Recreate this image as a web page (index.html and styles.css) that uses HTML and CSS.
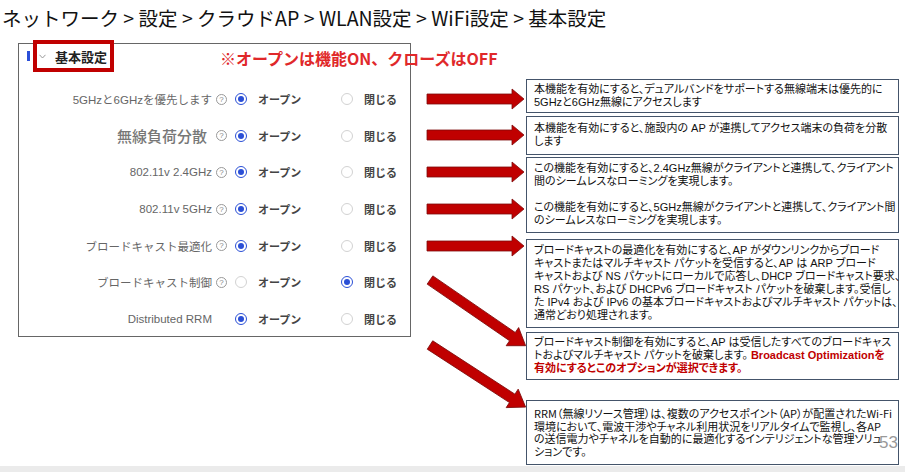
FILE: index.html
```html
<!DOCTYPE html>
<html lang="ja">
<head>
    <meta charset="UTF-8">
    <title>基本設定</title>
    <link rel="stylesheet" href="styles.css">
</head>
<body>
<div class="page">
    <h1 class="title">ネットワーク &gt; 設定 &gt; クラウドAP &gt; WLAN設定 &gt; WiFi設定 &gt; 基本設定</h1>

    <div class="content">
        <!-- 設定パネル -->
        <div class="panel">
            <div class="panel-head">
                <span class="bar"></span>
                <div class="head-box">
                    <svg class="chev" width="7" height="5" viewBox="0 0 7 5"><polyline points="0.5,0.8 3.5,4 6.5,0.8" fill="none" stroke="#999" stroke-width="1"/></svg>
                    <strong>基本設定</strong>
                </div>
                <span class="note">※オープンは機能ON、クローズはOFF</span>
            </div>

            <div class="rows">
                <div class="row">
                    <span class="label">5GHzと6GHzを優先します</span>
                    <span class="help">?</span>
                    <div class="opts">
                        <div class="opt"><span class="radio on"></span><span class="opt-text">オープン</span></div>
                        <div class="opt"><span class="radio"></span><span class="opt-text">閉じる</span></div>
                    </div>
                </div>
                <div class="row">
                    <span class="label big">無線負荷分散</span>
                    <span class="help">?</span>
                    <div class="opts">
                        <div class="opt"><span class="radio on"></span><span class="opt-text">オープン</span></div>
                        <div class="opt"><span class="radio"></span><span class="opt-text">閉じる</span></div>
                    </div>
                </div>
                <div class="row">
                    <span class="label">802.11v 2.4GHz</span>
                    <span class="help">?</span>
                    <div class="opts">
                        <div class="opt"><span class="radio on"></span><span class="opt-text">オープン</span></div>
                        <div class="opt"><span class="radio"></span><span class="opt-text">閉じる</span></div>
                    </div>
                </div>
                <div class="row">
                    <span class="label">802.11v 5GHz</span>
                    <span class="help">?</span>
                    <div class="opts">
                        <div class="opt"><span class="radio on"></span><span class="opt-text">オープン</span></div>
                        <div class="opt"><span class="radio"></span><span class="opt-text">閉じる</span></div>
                    </div>
                </div>
                <div class="row">
                    <span class="label">ブロードキャスト最適化</span>
                    <span class="help">?</span>
                    <div class="opts">
                        <div class="opt"><span class="radio on"></span><span class="opt-text">オープン</span></div>
                        <div class="opt"><span class="radio"></span><span class="opt-text">閉じる</span></div>
                    </div>
                </div>
                <div class="row">
                    <span class="label">ブロードキャスト制御</span>
                    <span class="help">?</span>
                    <div class="opts">
                        <div class="opt"><span class="radio"></span><span class="opt-text">オープン</span></div>
                        <div class="opt"><span class="radio on"></span><span class="opt-text">閉じる</span></div>
                    </div>
                </div>
                <div class="row">
                    <span class="label">Distributed RRM</span>
                    <span class="help blank"></span>
                    <div class="opts">
                        <div class="opt"><span class="radio on"></span><span class="opt-text">オープン</span></div>
                        <div class="opt"><span class="radio"></span><span class="opt-text">閉じる</span></div>
                    </div>
                </div>
            </div>
        </div>

        <!-- 説明ボックス -->
        <div class="notes">
            <div class="box b1">本機能を有効にすると、デュアルバンドをサポートする無線端末は優先的に<br>5GHzと6GHz無線にアクセスします</div>
            <div class="box b2">本機能を有効にすると、施設内の AP が連携してアクセス端末の負荷を分散<br>します</div>
            <div class="box b3">この機能を有効にすると、2.4GHz無線がクライアントと連携して、クライアント<br>間のシームレスなローミングを実現します。<br><br>この機能を有効にすると、5GHz無線がクライアントと連携して、クライアント間<br>のシームレスなローミングを実現します。</div>
            <div class="box b5">ブロードキャストの最適化を有効にすると、AP がダウンリンクからブロード<br>キャストまたはマルチキャスト パケットを受信すると、AP は ARP ブロード<br>キャストおよび NS パケットにローカルで応答し、DHCP ブロードキャスト要求、<br>RS パケット、および DHCPv6 ブロードキャスト パケットを破棄します。受信し<br>た IPv4 および IPv6 の基本ブロードキャストおよびマルチキャスト パケットは、<br>通常どおり処理されます。</div>
            <div class="box b6">ブロードキャスト制御を有効にすると、AP は受信したすべてのブロードキャス<br>トおよびマルチキャスト パケットを破棄します。 <span class="red">Broadcast Optimizationを<br>有効にするとこのオプションが選択できます。</span></div>
            <div class="box b7">RRM（無線リソース管理）は、複数のアクセスポイント（AP）が配置されたWi-Fi<br>環境において、電波干渉やチャネル利用状況をリアルタイムで監視し、各AP<br>の送信電力やチャネルを自動的に最適化するインテリジェントな管理ソリュ<br>ションです。</div>
        </div>
    </div>

    <!-- 矢印 -->
    <svg class="arrows" width="905" height="466" viewBox="0 0 905 466">
        <g fill="#c00000" stroke="#7d0b0b" stroke-width="0.8">
            <polygon transform="translate(427,99)" points="0,-5 85,-5 85,-10 97,0 85,10 85,5 0,5"/>
            <polygon transform="translate(427,135)" points="0,-5 85,-5 85,-10 97,0 85,10 85,5 0,5"/>
            <polygon transform="translate(427,172)" points="0,-5 85,-5 85,-10 97,0 85,10 85,5 0,5"/>
            <polygon transform="translate(427,209)" points="0,-5 85,-5 85,-10 97,0 85,10 85,5 0,5"/>
            <polygon transform="translate(427,246)" points="0,-5 85,-5 85,-10 97,0 85,10 85,5 0,5"/>
            <polygon transform="translate(430,280) rotate(34.5)" points="0,-5 100,-5 100,-11 116,0 100,11 100,5 0,5"/>
            <polygon transform="translate(430,345) rotate(33)" points="0,-5 98,-5 98,-11 114,0 98,11 98,5 0,5"/>
        </g>
    </svg>

    <span class="page-no">53</span>
</div>
</body>
</html>
```

FILE: styles.css
```css
* {
    box-sizing: border-box;
}
body {
    margin: 0;
    background-color: #ebebeb;
    font-family: "Noto Sans CJK JP", sans-serif;
}
.page {
    position: relative;
    width: 905px;
    height: 466px;
    background-color: #fff;
    overflow: hidden;
}
.title {
    margin: 0;
    height: 43px;
    padding: 5px 0 0 2px;
    font-size: 19.5px;
    font-weight: 400;
    line-height: 26px;
    color: #111;
    white-space: nowrap;
}
.content {
    display: flex;
    align-items: flex-start;
}

/* パネル */
.panel {
    flex-shrink: 0;
    margin-left: 18px;
    width: 393px;
    height: 294px;
    border: 1px solid #666;
}
.panel-head {
    display: flex;
    align-items: center;
    height: 32px;
    margin-top: -4px;
}
.bar {
    flex-shrink: 0;
    width: 3px;
    height: 10px;
    margin-left: 8px;
    background-color: #2b4fd8;
}
.head-box {
    flex-shrink: 0;
    display: flex;
    align-items: center;
    width: 81px;
    height: 32px;
    margin-left: 3px;
    padding-left: 2px;
    border: 4px solid #c00000;
}
.chev {
    flex-shrink: 0;
}
.head-box strong {
    margin-left: 9px;
    font-size: 13px;
    color: #222;
    white-space: nowrap;
}
.note {
    flex-shrink: 0;
    margin-left: 106px;
    margin-top: 4px;
    font-size: 16px;
    font-weight: 700;
    color: #e0282a;
    white-space: nowrap;
}
.rows {
    margin-top: 9px;
}
.row {
    display: flex;
    align-items: center;
    height: 36.6px;
}
.label {
    flex-shrink: 0;
    width: 193px;
    text-align: right;
    font-family: "Liberation Sans", "Noto Sans CJK JP", sans-serif;
    font-size: 11.5px;
    color: #666;
    white-space: nowrap;
}
.label.big {
    padding-right: 5px;
    font-family: "Noto Sans CJK JP", sans-serif;
    font-size: 15px;
    font-weight: 500;
    color: #777;
}
.help {
    flex-shrink: 0;
    display: flex;
    align-items: center;
    justify-content: center;
    width: 11px;
    height: 11px;
    margin-left: 4px;
    border: 1px solid #999;
    border-radius: 50%;
    font-family: "Liberation Sans", sans-serif;
    font-size: 8px;
    color: #888;
}
.help.blank {
    visibility: hidden;
}
.opts {
    display: flex;
    margin-left: 8px;
}
.opt {
    flex-shrink: 0;
    display: flex;
    align-items: center;
    width: 106px;
}
.opt + .opt {
    width: auto;
}
.radio {
    flex-shrink: 0;
    position: relative;
    width: 12px;
    height: 12px;
    border: 1px solid #d2d2d2;
    border-radius: 50%;
}
.radio.on {
    border-color: #2a4fd6;
}
.radio.on::after {
    content: "";
    position: absolute;
    top: 2px;
    left: 2px;
    width: 6px;
    height: 6px;
    border-radius: 50%;
    background-color: #2a4fd6;
}
.opt-text {
    margin-left: 11px;
    font-size: 11px;
    font-weight: 700;
    color: #444;
    white-space: nowrap;
}

/* 説明ボックス */
.notes {
    display: flex;
    flex-direction: column;
    width: 373px;
    margin-left: 115px;
    margin-top: 36px;
}
.box {
    padding: 3px 7px;
    border: 1px solid #44546a;
    font-family: "Liberation Sans", "Noto Sans CJK JP", sans-serif;
    font-size: 11px;
    line-height: 13px;
    color: #111;
    white-space: nowrap;
    font-feature-settings: "palt";
}
.b2 {
    margin-top: 3px;
    padding-top: 5px;
    padding-bottom: 6px;
}
.b3 {
    margin-top: 2px;
    padding-top: 4px;
    padding-bottom: 5px;
}
.b5 {
    margin-top: 6px;
    padding-top: 4px;
    padding-bottom: 5px;
}
.b6 {
    margin-top: 4px;
    padding-bottom: 4px;
}
.b7 {
    margin-top: 20px;
    padding-top: 6px;
    padding-bottom: 7px;
    font-family: "Noto Sans CJK JP", sans-serif;
    line-height: 12.5px;
}
.red {
    color: #c00000;
    font-weight: 700;
}

.arrows {
    position: absolute;
    left: 0;
    top: 0;
    pointer-events: none;
}
.page-no {
    position: absolute;
    right: 7px;
    top: 433px;
    font-family: "Liberation Sans", sans-serif;
    font-size: 17px;
    color: #999;
}
```
